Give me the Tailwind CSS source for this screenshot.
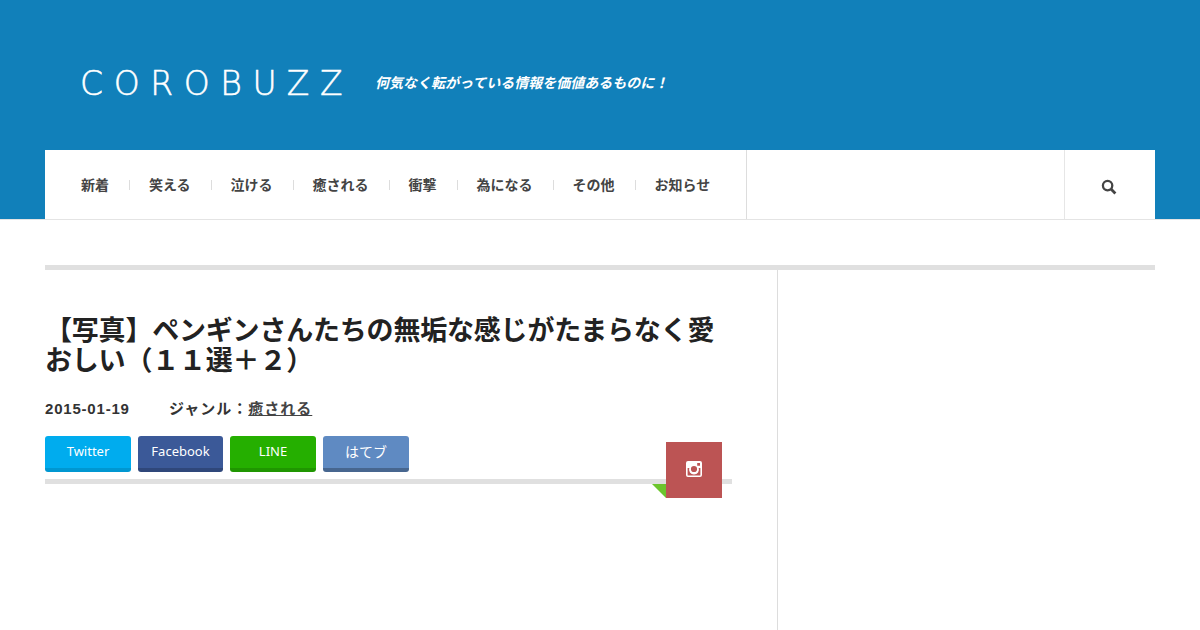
<!DOCTYPE html>
<html lang="ja">

<head>
  <meta charset="UTF-8" />
  <meta name="viewport" content="width=device-width, initial-scale=1.0" />
  <title>COROBUZZ</title>
  <script src="https://cdn.jsdelivr.net/npm/@tailwindcss/browser@4"></script>
</head>

<body class="bg-white h-[630px] overflow-hidden font-['Liberation_Sans','Noto_Sans_CJK_JP',sans-serif]">

  <!-- header -->
  <header class="bg-[#1180ba] h-[220px] px-[45px] flex flex-col border-b border-[#e4e4e4]">
    <div class="h-[150px] pl-[36px] pt-[16px] flex items-center shrink-0">
      <div class="w-[294px] font-['DejaVu_Sans',sans-serif] font-extralight text-[33px] leading-none tracking-[10.6px] [-webkit-text-stroke:0.5px_white] -ml-[1px] mr-[1px] text-white">COROBUZZ</div>
      <div class="text-[14px] font-bold italic text-white">何気なく転がっている情報を価値あるものに！</div>
    </div>

    <nav class="bg-white h-[69px] flex">
      <ul class="w-[701px] pl-[36px] pt-[1px] flex items-center text-[14px] font-bold text-[#444]">
        <li>新着</li>
        <li class="w-px h-[10px] bg-[#ddd] ml-[20px] mr-[19px]"></li>
        <li>笑える</li>
        <li class="w-px h-[10px] bg-[#ddd] ml-[20px] mr-[19px]"></li>
        <li>泣ける</li>
        <li class="w-px h-[10px] bg-[#ddd] ml-[20px] mr-[19px]"></li>
        <li>癒される</li>
        <li class="w-px h-[10px] bg-[#ddd] ml-[20px] mr-[19px]"></li>
        <li>衝撃</li>
        <li class="w-px h-[10px] bg-[#ddd] ml-[20px] mr-[19px]"></li>
        <li>為になる</li>
        <li class="w-px h-[10px] bg-[#ddd] ml-[20px] mr-[19px]"></li>
        <li>その他</li>
        <li class="w-px h-[10px] bg-[#ddd] ml-[20px] mr-[19px]"></li>
        <li>お知らせ</li>
      </ul>
      <div class="flex-1 border-l border-[#ddd]"></div>
      <div class="w-[91px] border-l border-[#e6e6e6] flex items-center justify-center pr-[2px] pt-[5px]">
        <svg width="16" height="16" viewBox="0 0 16 16" fill="none" stroke="#444">
          <circle cx="6.6" cy="6.6" r="4.7" stroke-width="2.3" />
          <path d="M10.2 10.2L14.4 14.4" stroke-width="2.8" />
        </svg>
      </div>
    </nav>
  </header>

  <!-- main -->
  <main class="mx-[45px] mt-[45px] border-t-[5px] border-[#e0e0e0] flex h-[365px]">
    <article class="w-[733px] border-r border-[#ddd] pr-[45px]">
      <h1 class="mt-[46px] text-[27px] leading-[30px] font-bold tracking-[-0.2px] text-[#222] w-[687px]">【写真】ペンギンさんたちの無垢な感じがたまらなく愛おしい（１１選＋２）</h1>

      <div class="mt-[22px] flex text-[15px] font-bold text-[#333] leading-[22px]">
        <span class="w-[124px] tracking-[0.8px]">2015-01-19</span>
        <span class="tracking-[1px]">ジャンル：<a class="underline text-[#444]">癒される</a></span>
      </div>

      <div class="mt-[16px] flex gap-[7px] font-['Noto_Sans','Noto_Sans_CJK_JP',sans-serif] text-[13px] text-white">
        <a class="w-[86px] h-[36px] rounded-[3px] bg-[#00acee] border-b-[4px] border-[#0097d1] flex items-center justify-center">Twitter</a>
        <a class="w-[85px] h-[36px] rounded-[3px] bg-[#3b5998] border-b-[4px] border-[#2f477a] flex items-center justify-center">Facebook</a>
        <a class="w-[86px] h-[36px] rounded-[3px] bg-[#25af00] border-b-[4px] border-[#1f9600] flex items-center justify-center">LINE</a>
        <a class="w-[86px] h-[36px] rounded-[3px] bg-[#5f8ac2] border-b-[4px] border-[#47668f] flex items-center justify-center text-[14px] pb-[2px]">はてブ</a>
      </div>

      <div class="relative mt-[7px] h-[5px] bg-[#e0e0e0]">
        <div class="absolute left-[607px] top-[5px] w-0 h-0 border-l-[14px] border-l-transparent border-t-[14px] border-t-[#6cc52d]"></div>
        <div class="absolute left-[621px] top-[-37px] w-[56px] h-[56px] bg-[#bc5454] flex items-center justify-center pb-[2px]">
          <svg width="16" height="16" viewBox="0 0 16 16">
            <path fill="#fff" fill-rule="evenodd" d="M2 0h12a2 2 0 0 1 2 2v12a2 2 0 0 1-2 2H2a2 2 0 0 1-2-2V2a2 2 0 0 1 2-2zM11.2 2v2.8H14V2zM1.6 6.9V14a.5.5 0 0 0 .5.5h11.8a.5.5 0 0 0 .5-.5V6.9h-1.7a5 5 0 1 1-9.4 0zM8 4.9a3.1 3.1 0 1 0 0 6.2 3.1 3.1 0 0 0 0-6.2z" />
          </svg>
        </div>
      </div>
    </article>
    <aside class="flex-1"></aside>
  </main>

</body>

</html>
